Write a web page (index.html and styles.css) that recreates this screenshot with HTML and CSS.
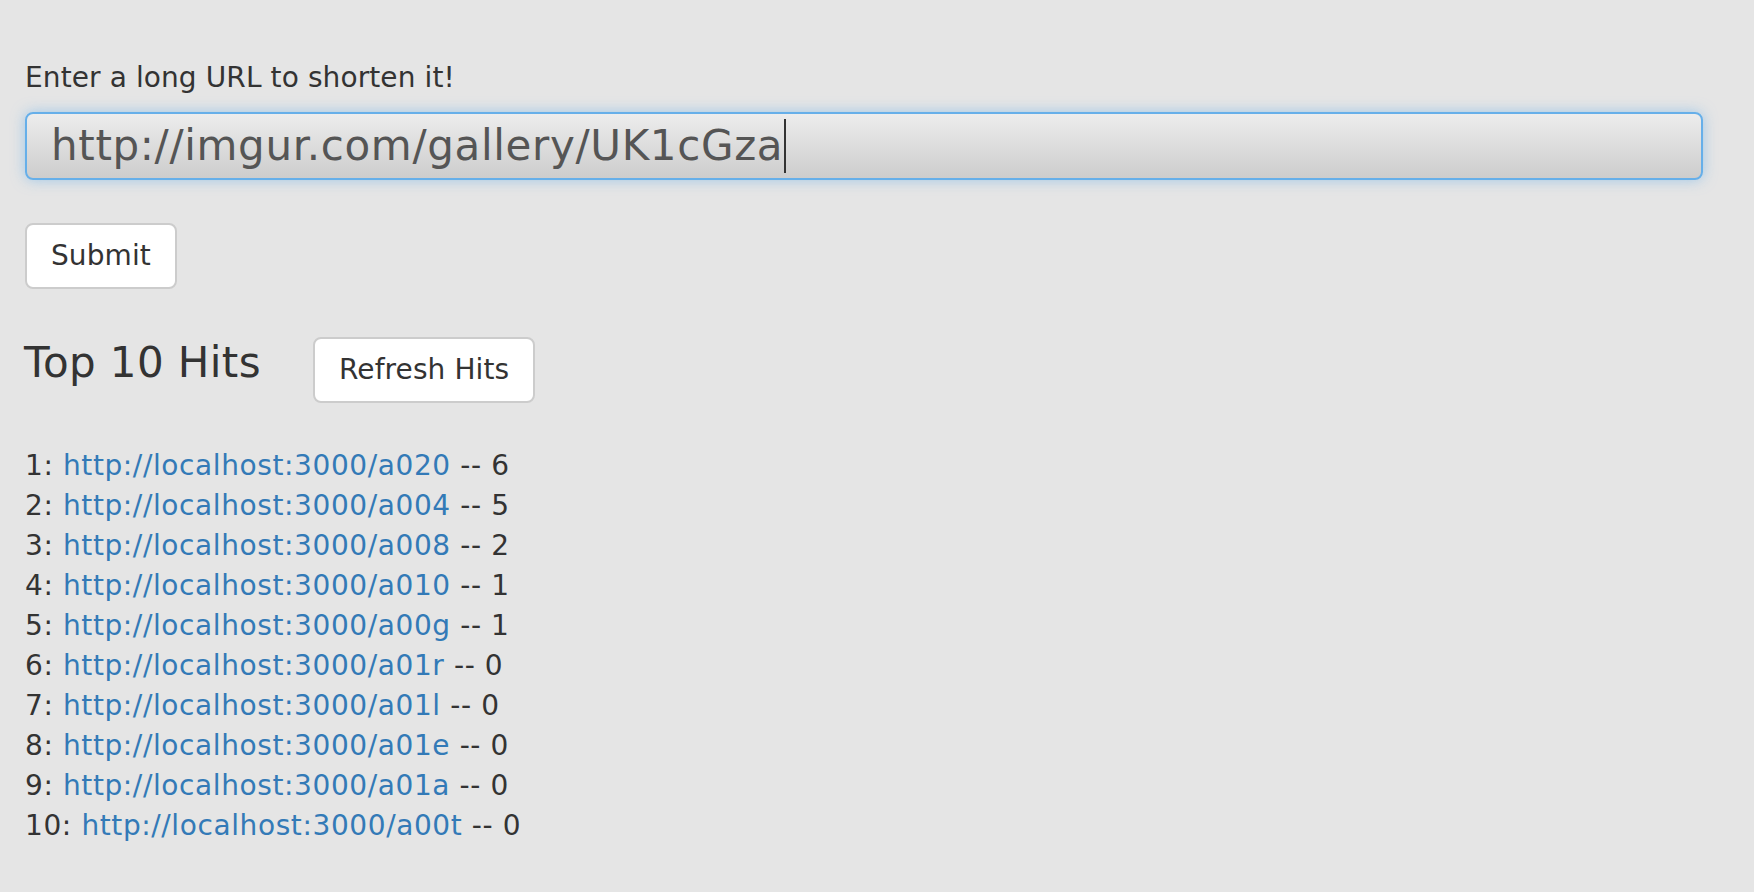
FILE: index.html
```html
<!DOCTYPE html>
<html lang="en">
<head>
<meta charset="utf-8">
<title>URL Shortener</title>
<link rel="stylesheet" href="styles.css">
</head>
<body>
<main class="page">
  <form class="shorten-form">
    <label class="field-label" for="url">Enter a long URL to shorten it!</label>
    <div class="field" id="url" role="textbox"><span class="field-text">http://imgur.com/gallery/UK1cGza</span><span class="caret"></span></div>
    <button type="button" class="btn btn-submit">Submit</button>
  </form>
  <section class="hits">
    <div class="hits-head">
      <h3 class="hits-title">Top 10 Hits</h3>
      <button type="button" class="btn">Refresh Hits</button>
    </div>
    <ol class="hits-list">
      <li>1: <a href="#">http://localhost:3000/a020</a> -- 6</li>
      <li>2: <a href="#">http://localhost:3000/a004</a> -- 5</li>
      <li>3: <a href="#">http://localhost:3000/a008</a> -- 2</li>
      <li>4: <a href="#">http://localhost:3000/a010</a> -- 1</li>
      <li>5: <a href="#">http://localhost:3000/a00g</a> -- 1</li>
      <li>6: <a href="#">http://localhost:3000/a01r</a> -- 0</li>
      <li>7: <a href="#">http://localhost:3000/a01l</a> -- 0</li>
      <li>8: <a href="#">http://localhost:3000/a01e</a> -- 0</li>
      <li>9: <a href="#">http://localhost:3000/a01a</a> -- 0</li>
      <li>10: <a href="#">http://localhost:3000/a00t</a> -- 0</li>
    </ol>
  </section>
</main>
</body>
</html>
```
FILE: styles.css
```css
html, body {
  margin: 0;
  padding: 0;
}
body {
  background: #e5e5e5;
  color: #333;
  font-family: "DejaVu Sans", Verdana, sans-serif;
  font-size: 28px;
  line-height: 40px;
}
.page {
  padding: 58px 51px 0 25px;
}
.shorten-form {
  display: flex;
  flex-direction: column;
  align-items: flex-start;
}
.field-label {
  display: block;
  margin-bottom: 14px;
  letter-spacing: 0.1px;
}
.field {
  align-self: stretch;
  box-sizing: border-box;
  height: 68px;
  display: flex;
  align-items: center;
  padding: 0 24px;
  border: 2px solid #66afe9;
  border-radius: 8px;
  background: linear-gradient(#ededed, #cdcdcd);
  box-shadow: 0 0 14px rgba(102, 175, 233, 0.55);
  font-size: 42px;
  line-height: 48px;
  color: #555;
}
.field-text {
  letter-spacing: 0.65px;
}
.caret {
  width: 2px;
  height: 54px;
  margin-left: 1px;
  background: #333;
}
.btn {
  box-sizing: border-box;
  padding: 11px 24px;
  border: 2px solid #ccc;
  border-radius: 8px;
  background: #fff;
  color: #333;
  font-family: inherit;
  font-size: 28px;
  line-height: 40px;
  letter-spacing: 0.1px;
  cursor: pointer;
}
.btn-submit {
  margin-top: 43px;
}
.hits-head {
  display: flex;
  align-items: flex-start;
  gap: 52px;
  margin-top: 48px;
}
.hits-title {
  margin: 3px 0 0 -1px;
  font-size: 42px;
  font-weight: normal;
  line-height: 46px;
  letter-spacing: 0.4px;
}
.hits-list {
  list-style: none;
  margin: 43px 0 0;
  padding: 0;
  letter-spacing: 0.6px;
}
.hits-list a {
  color: #337ab7;
  text-decoration: none;
}
```
